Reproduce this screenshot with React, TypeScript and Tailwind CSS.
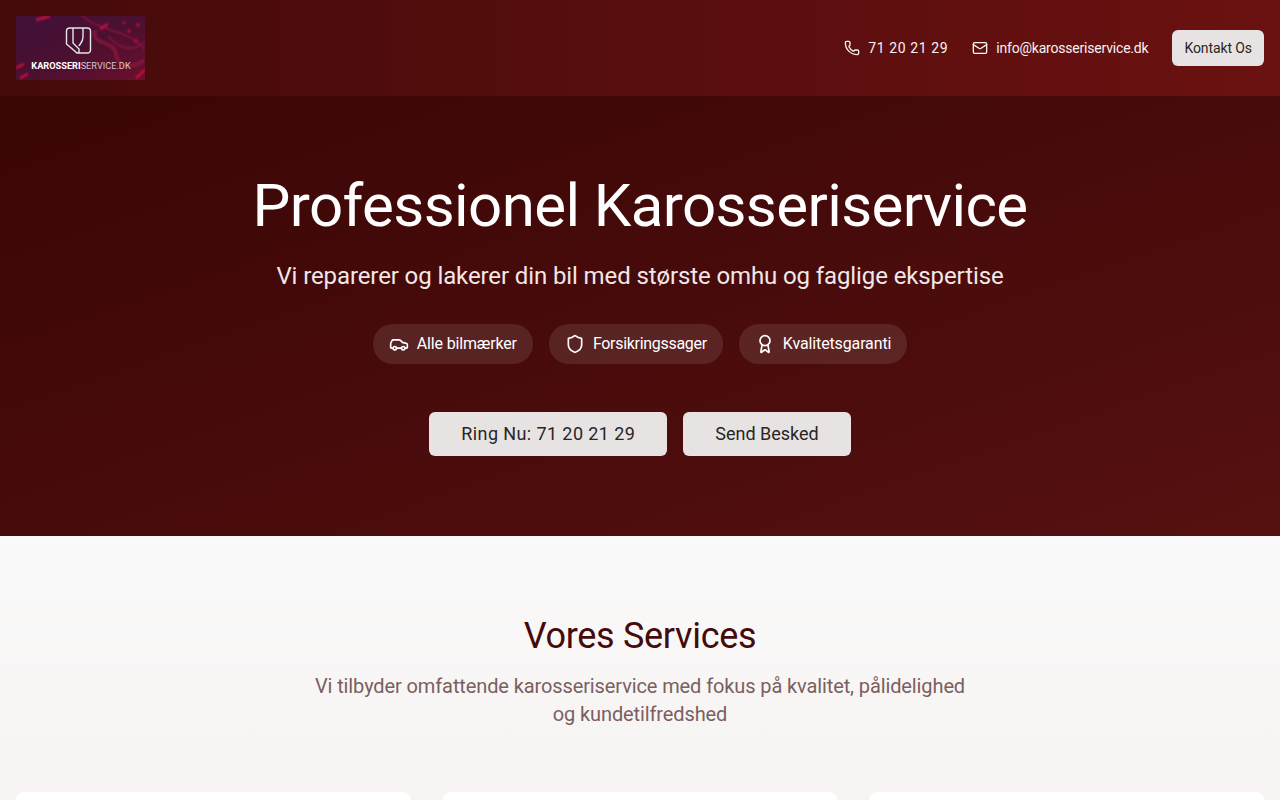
import { Mail, Phone, Car, Shield, Award } from 'lucide-react';

function Logo() {
  return (
    <div className="relative h-16 w-[129px] overflow-hidden bg-[#3d1030]">
      <svg viewBox="0 0 129 64" className="absolute inset-0 h-full w-full" aria-hidden="true">
        <defs>
          <linearGradient id="logoBg" x1="0" y1="0" x2="1" y2="1">
            <stop offset="0" stopColor="#40103a" />
            <stop offset="0.5" stopColor="#4a1030" />
            <stop offset="1" stopColor="#6a0f2e" />
          </linearGradient>
          <filter id="soft">
            <feGaussianBlur stdDeviation="0.8" />
          </filter>
        </defs>
        <rect width="129" height="64" fill="url(#logoBg)" />
        <g filter="url(#soft)" fill="none">
          <path d="M80 14 C72 28 98 24 100 38 C101 50 114 54 129 44" stroke="#7d1437" strokeWidth="4" />
          <path d="M66 0 C84 16 116 14 129 34 M92 20 C104 34 116 36 129 26" stroke="#80123a" strokeWidth="2" />
          <path d="M20 4 L34 0 M84 13 L92 8 M0 52 L8 48 M4 62 L12 58 M120 62 L129 54" stroke="#c0103a" strokeWidth="3" />
          <circle cx="122" cy="9" r="1.6" fill="#d5183f" />
          <circle cx="113" cy="15" r="1.4" fill="#d5183f" />
          <circle cx="120" cy="25" r="1.4" fill="#d5183f" />
          <circle cx="108" cy="7" r="1.2" fill="#d5183f" />
        </g>
        <path d="M50.5 15 C50.5 13 52 12 54 12 H71 C73 12 74.5 13 74.5 15 V34 C74.5 36 73 37 71 37 H61 L50.5 28 Z M57 12 V27 L63 33 V37 M67 12 V21 C67 26 64 28 63 30" fill="none" stroke="#e8e4e8" strokeWidth="1.4" />
      </svg>
      <div className="absolute inset-x-0 top-[44px] flex justify-center pl-[1px] text-[9.2px] leading-3 text-[#cfc8d0]">
        <span className="font-bold text-white">KAROSSERI</span>
        <span>SERVICE.DK</span>
      </div>
    </div>
  );
}

const chips = [
  { icon: Car, label: 'Alle bilmærker', tracking: 'tracking-[-0.15px]' },
  { icon: Shield, label: 'Forsikringssager', tracking: 'tracking-[-0.3px]' },
  { icon: Award, label: 'Kvalitetsgaranti', tracking: 'tracking-[-0.13px]' },
];

export default function App() {
  return (
    <div className="min-h-screen bg-[#fafafa] font-['Roboto',sans-serif]">
      <header className="flex h-24 items-center justify-between bg-gradient-to-r from-[#450a0a] to-[#6b1111] px-4">
        <Logo />
        <div className="flex items-center gap-6 text-sm text-[#f7f2f2]">
          <div className="flex items-center gap-2">
            <Phone className="h-4 w-4" />
            <span className="tracking-[0.6px]">71 20 21 29</span>
          </div>
          <div className="flex items-center gap-2">
            <Mail className="h-4 w-4" />
            <span className="tracking-[-0.2px]">info@karosseriservice.dk</span>
          </div>
          <button className="h-9 rounded-md bg-[#e7e3e3] px-3 text-sm tracking-[-0.1px] text-[#292524]">Kontakt Os</button>
        </div>
      </header>

      <section className="bg-gradient-to-br from-[#3a0606] to-[#561010] py-20 text-center text-white">
        <h1 className="mb-6 text-6xl tracking-[-0.6px]">Professionel Karosseriservice</h1>
        <p className="mb-8 text-2xl tracking-[-0.11px] text-[#f1e7e7]">Vi reparerer og lakerer din bil med største omhu og faglige ekspertise</p>
        <div className="mb-12 flex justify-center gap-4">
          {chips.map(({ icon: Icon, label, tracking }) => (
            <div key={label} className="flex h-10 items-center gap-2 rounded-full bg-white/10 px-4 text-base">
              <Icon className="h-5 w-5" />
              <span className={tracking}>{label}</span>
            </div>
          ))}
        </div>
        <div className="flex justify-center gap-4">
          <button className="h-11 rounded-md bg-[#e7e3e3] px-8 text-lg tracking-[0.4px] text-[#292524]">Ring Nu: 71 20 21 29</button>
          <button className="h-11 rounded-md bg-[#e7e3e3] px-8 text-lg text-[#292524]">Send Besked</button>
        </div>
      </section>

      <section className="bg-gradient-to-b from-[#fafafa] to-[#f3ebe8] px-4 py-20">
        <div className="mb-16 text-center">
          <h2 className="mb-4 text-4xl tracking-[-0.3px] text-[#450a0a]">Vores Services</h2>
          <p className="mx-auto max-w-2xl text-xl tracking-[-0.11px] text-[#7a5f5f]">Vi tilbyder omfattende karosseriservice med fokus på kvalitet, pålidelighed og kundetilfredshed</p>
        </div>
        <div className="grid grid-cols-3 gap-8">
          <div className="h-64 rounded-lg bg-white" />
          <div className="h-64 rounded-lg bg-white" />
          <div className="h-64 rounded-lg bg-white" />
        </div>
      </section>
    </div>
  );
}
